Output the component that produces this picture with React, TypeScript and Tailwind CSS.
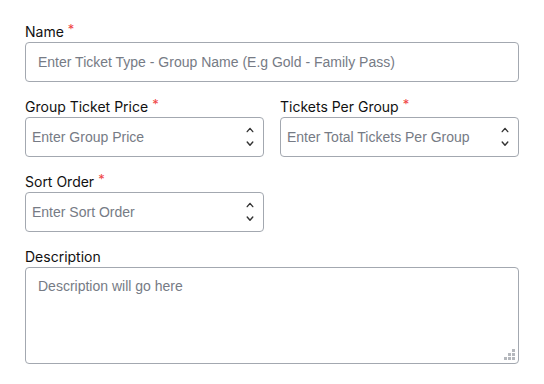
import React from 'react';

const labelCls = "block text-[14px] leading-5 font-normal text-[#111]";
const labelFont = { fontFamily: 'Inter, sans-serif' };
const inputFont = { fontFamily: '"Liberation Sans", Arial, sans-serif' };
const inputBase =
  "w-full h-10 rounded-[4px] border border-[#a3a8b0] bg-white text-[14px] text-[#333] placeholder:text-[#767b85] outline-none";

const Required = () => <span className="ml-1 text-[#ef4444] text-[13px] relative -top-[3px]">*</span>;

const Spinner = () => (
  <svg className="absolute right-[10px] top-1/2 -translate-y-1/2 pointer-events-none" width="8" height="20" viewBox="0 0 8 20" fill="none">
    <path d="M1.2 4.6 L4 1.4 L6.8 4.6" stroke="#333" strokeWidth="1.4" strokeLinecap="round" strokeLinejoin="round" />
    <path d="M1.2 15 L4 18.2 L6.8 15" stroke="#333" strokeWidth="1.4" strokeLinecap="round" strokeLinejoin="round" />
  </svg>
);

const NumberField: React.FC<{ label: string; placeholder: string }> = ({ label, placeholder }) => (
  <div>
    <label className={labelCls} style={labelFont}>
      {label}
      <Required />
    </label>
    <div className="relative">
      <input type="text" placeholder={placeholder} className={`${inputBase} pl-[6px] pr-8`} style={inputFont} />
      <Spinner />
    </div>
  </div>
);

const App: React.FC = () => {
  return (
    <div className="w-[544px] h-[384px] bg-white px-[25px] pt-[22px]">
      <div className="flex flex-col gap-[15px]">
        <div>
          <label className={labelCls} style={labelFont}>
            Name
            <Required />
          </label>
          <input
            type="text"
            placeholder="Enter Ticket Type - Group Name (E.g Gold - Family Pass)"
            className={`${inputBase} px-3`}
            style={inputFont}
          />
        </div>

        <div className="grid grid-cols-2 gap-4">
          <NumberField label="Group Ticket Price" placeholder="Enter Group Price" />
          <NumberField label="Tickets Per Group" placeholder="Enter Total Tickets Per Group" />
        </div>

        <div className="grid grid-cols-2 gap-4">
          <NumberField label="Sort Order" placeholder="Enter Sort Order" />
        </div>

        <div>
          <label className={labelCls} style={labelFont}>Description</label>
          <div className="relative">
            <textarea
              placeholder="Description will go here"
              className="block w-full h-[97px] resize-none rounded-[4px] border border-[#a3a8b0] bg-white px-3 py-[8px] text-[14px] leading-5 text-[#333] placeholder:text-[#767b85] outline-none"
              style={inputFont}
            />
            <svg className="absolute right-[4px] bottom-[4px] pointer-events-none" width="11" height="11" viewBox="0 0 11 11">
              {[
                [8, 0],
                [4, 4], [8, 4],
                [0, 8], [4, 8], [8, 8],
              ].map(([x, y], i) => (
                <rect key={i} x={x} y={y} width="3" height="3" fill="#b5b8bd" />
              ))}
            </svg>
          </div>
        </div>
      </div>
    </div>
  );
};

export default App;
